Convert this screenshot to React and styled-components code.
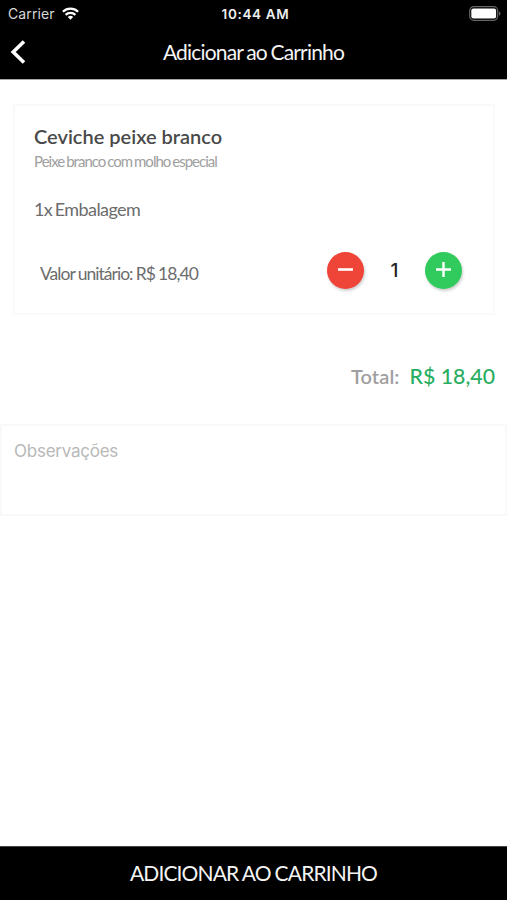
import React, { useState } from "react";
import styled, { createGlobalStyle } from "styled-components";

const GlobalStyle = createGlobalStyle`
  * {
    box-sizing: border-box;
  }
  body {
    margin: 0;
    background: #fff;
    font-family: Lato, sans-serif;
  }
  button {
    border: 0;
    padding: 0;
    font-family: inherit;
    cursor: pointer;
  }
`;

const Screen = styled.div`
  display: flex;
  flex-direction: column;
  height: 100vh;
  min-height: 900px;
`;

const Header = styled.header`
  height: 80px;
  background: #000;
  color: #fff;
  border-bottom: 1px solid #a8a8a8;
`;

const StatusBar = styled.div`
  display: grid;
  grid-template-columns: 1fr auto 1fr;
  align-items: center;
  height: 27px;
  padding: 0 6px 0 8px;
  font-family: Inter, sans-serif;
  font-size: 14px;
`;

const Carrier = styled.div`
  display: flex;
  align-items: center;
  gap: 7px;
  color: #d8d8d8;
  letter-spacing: 0.1px;
`;

const Clock = styled.div`
  padding-left: 2px;
  font-size: 13.5px;
  font-weight: 600;
  letter-spacing: 0.65px;
  color: #eee;
`;

const Battery = styled.svg`
  justify-self: end;
`;

const NavBar = styled.nav`
  display: grid;
  grid-template-columns: 60px 1fr 60px;
  align-items: center;
  height: 50px;
`;

const BackButton = styled.button`
  display: flex;
  padding-left: 10px;
  background: none;
`;

const NavTitle = styled.h1`
  margin: 0;
  font-size: 21px;
  line-height: 24px;
  font-weight: 400;
  letter-spacing: -0.82px;
  word-spacing: -1px;
  text-align: center;
  color: #f4f4f4;
`;

const Content = styled.main`
  flex: 1;
`;

const Card = styled.section`
  height: 211px;
  margin: 24px 12px 0 13px;
  padding: 18px 31px 0 19px;
  border: 2px solid #f9f9f9;
`;

const ItemName = styled.h2`
  margin: 0;
  font-size: 20px;
  line-height: 24px;
  font-weight: 600;
  color: #4a4a4a;
`;

const ItemDescription = styled.p`
  margin: 4px 0 0;
  font-size: 15px;
  line-height: 18px;
  letter-spacing: -0.98px;
  word-spacing: -1px;
  color: #a0a0a0;
`;

const ItemOption = styled.p`
  margin: 27px 0 0;
  font-size: 18px;
  line-height: 24px;
  letter-spacing: -0.6px;
  word-spacing: -1.4px;
  color: #6c6c6c;
`;

const PriceRow = styled.div`
  display: flex;
  justify-content: space-between;
  align-items: center;
  height: 38px;
  margin-top: 30px;
  padding-left: 6px;
`;

const UnitPrice = styled.span`
  padding-top: 6px;
  font-size: 17.5px;
  letter-spacing: -0.97px;
  word-spacing: -0.3px;
  color: #6c6c6c;
`;

const Stepper = styled.div`
  display: flex;
  align-items: center;
`;

const RoundButton = styled.button`
  display: flex;
  justify-content: center;
  width: 37px;
  height: 37px;
  padding-top: 9px;
  border-radius: 50%;
  background: ${({ color }) => color};
  box-shadow: 1px 2px 3px rgba(0, 0, 0, 0.2);
`;

const Quantity = styled.span`
  width: 61px;
  font-family: Inter, sans-serif;
  font-size: 19px;
  font-weight: 500;
  text-align: center;
  color: #222;
`;

const TotalRow = styled.div`
  display: flex;
  justify-content: flex-end;
  align-items: baseline;
  gap: 10px;
  margin-top: 47px;
  padding-right: 12px;
  line-height: 28px;
`;

const TotalLabel = styled.span`
  font-size: 20px;
  font-weight: 600;
  letter-spacing: 0.1px;
  color: #a0a0a0;
`;

const TotalValue = styled.span`
  font-size: 21.3px;
  font-weight: 500;
  color: #27ae60;
`;

const Notes = styled.textarea`
  display: block;
  width: 100%;
  height: 92px;
  margin-top: 34px;
  padding: 15px 12px;
  border: 2px solid #f9f9f9;
  outline: 0;
  resize: none;
  font-family: Inter, sans-serif;
  font-size: 17px;
  line-height: 20px;
  letter-spacing: -0.25px;
  &::placeholder {
    color: #b8b8b8;
    opacity: 1;
  }
`;

const AddButton = styled.button`
  height: 54px;
  padding-bottom: 2px;
  border-top: 1px solid #444;
  background: #000;
  color: #f4f4f4;
  font-size: 21px;
  letter-spacing: -0.86px;
  word-spacing: -0.5px;
`;

const UNIT_PRICE = 18.4;

const formatPrice = (value) => `R$ ${value.toFixed(2).replace(".", ",")}`;

function App() {
  const [quantity, setQuantity] = useState(1);

  const onRemove = () => setQuantity((prev) => Math.max(1, prev - 1));
  const onAdd = () => setQuantity((prev) => prev + 1);

  return (
    <Screen>
      <GlobalStyle />
      <Header>
        <StatusBar>
          <Carrier>
            Carrier
            <svg width="17" height="13" viewBox="0 0 17 13" fill="none" stroke="#fff" strokeWidth="2.3">
              <path d="M0.9 4.7a10.8 10.8 0 0 1 15.2 0" />
              <path d="M3.6 7.9a7 7 0 0 1 9.8 0" />
              <path d="M8.5 12.8L5.8 10.1a3.8 3.8 0 0 1 5.4 0z" fill="#fff" stroke="none" />
            </svg>
          </Carrier>
          <Clock>10:44 AM</Clock>
          <Battery width="32" height="15" viewBox="0 0 32 15">
            <rect x="0.7" y="0.7" width="28" height="13.6" rx="4" fill="none" stroke="#666" strokeWidth="1.2" />
            <rect x="2.3" y="2.5" width="24.8" height="10" rx="2" fill="#fff" />
            <path d="M30 5.2v4.6q1.5-.7 1.5-2.3T30 5.2z" fill="#666" />
          </Battery>
        </StatusBar>
        <NavBar>
          <BackButton aria-label="Voltar">
            <svg width="16" height="24" viewBox="0 0 16 24" fill="none" stroke="#fff" strokeWidth="3.6">
              <path d="M14 1.5L3.2 12L14 22.5" />
            </svg>
          </BackButton>
          <NavTitle>Adicionar ao Carrinho</NavTitle>
        </NavBar>
      </Header>
      <Content>
        <Card>
          <ItemName>Ceviche peixe branco</ItemName>
          <ItemDescription>Peixe branco com molho especial</ItemDescription>
          <ItemOption>1x Embalagem</ItemOption>
          <PriceRow>
            <UnitPrice>Valor unitário: {formatPrice(UNIT_PRICE)}</UnitPrice>
            <Stepper>
              <RoundButton color="#ef4438" onClick={onRemove} aria-label="Remover">
                <svg width="16" height="16" viewBox="0 0 16 16" stroke="#fff" strokeWidth="2.6">
                  <path d="M0 8.5h15" />
                </svg>
              </RoundButton>
              <Quantity>{quantity}</Quantity>
              <RoundButton color="#31cb5d" onClick={onAdd} aria-label="Adicionar">
                <svg width="16" height="16" viewBox="0 0 16 16" stroke="#fff" strokeWidth="2.4">
                  <path d="M0 8.5h15M7.5 1v15" />
                </svg>
              </RoundButton>
            </Stepper>
          </PriceRow>
        </Card>
        <TotalRow>
          <TotalLabel>Total:</TotalLabel>
          <TotalValue>{formatPrice(UNIT_PRICE * quantity)}</TotalValue>
        </TotalRow>
        <Notes placeholder="Observações" />
      </Content>
      <AddButton>ADICIONAR AO CARRINHO</AddButton>
    </Screen>
  );
}

export default App;
